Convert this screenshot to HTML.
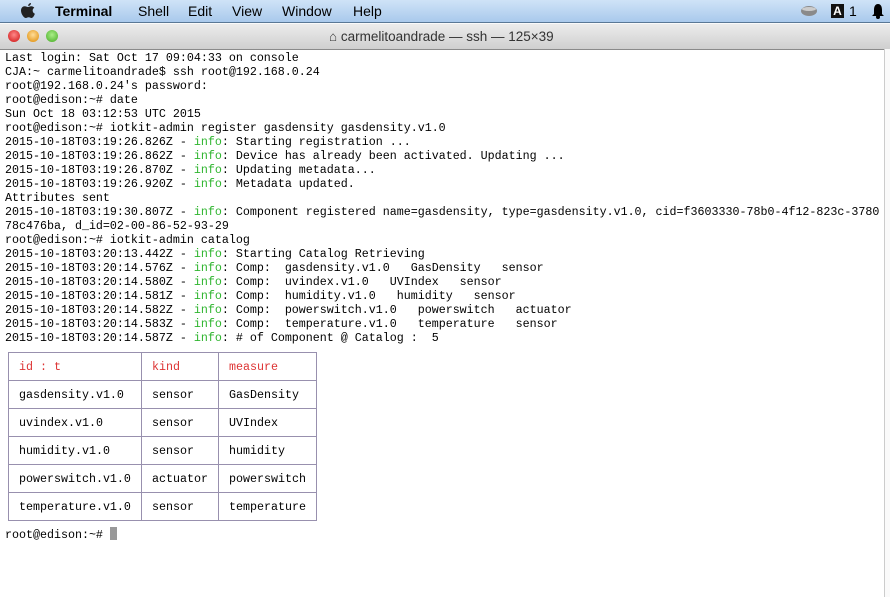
<!DOCTYPE html>
<html><head><style>
body{margin:0;width:890px;height:597px;overflow:hidden;background:#fff;font-family:"Liberation Sans",sans-serif;position:relative}
#menu{position:absolute;left:0;top:0;width:890px;height:22px;background:linear-gradient(#cfe3f7,#a9c9ec);border-bottom:1px solid #5a7896;font-size:14px;color:#000}
#menu span{position:absolute;top:3px}
#title{position:absolute;left:0;top:23px;width:890px;height:25px;background:linear-gradient(#ececec,#cfcfcf);border-top:1px solid #fafafa;border-bottom:1px solid #8a8a8a}
.dot{position:absolute;top:6px;width:12px;height:12px;border-radius:50%}
#term{position:absolute;left:5px;top:51px;font-family:"Liberation Mono",monospace;font-size:11.67px;line-height:14px;white-space:pre;color:#000}
.g{color:#2fb52f}
table{position:absolute;left:8px;top:352px;border-collapse:collapse;font-family:"Liberation Mono",monospace;font-size:11.67px}
td{border:1px solid #9890ae;height:28px;padding:0 0 0 10px;box-sizing:border-box}
.r{color:#d33}
#sb{position:absolute;right:0;top:49px;width:5px;height:548px;border-left:1px solid #ccc;background:#fafafa}
</style></head><body>
<div id="menu">
<svg style="position:absolute;left:20px;top:2px" width="16" height="18" viewBox="0 0 16 18"><path d="M11 1c0 1.5-1.2 3-2.8 3C8 2.5 9.3 1.1 11 1z" fill="#222"/><path d="M8 5c1 0 2-.8 3.3-.8 1 0 2.3.5 3 1.6-2.5 1.4-2 5 .6 6-.6 1.7-1.9 4.2-3.4 4.2-1.1 0-1.5-.7-2.8-.7-1.4 0-1.8.7-2.9.7C4 16 1 12 1 8.6 1 6 2.8 4.3 4.6 4.3 6 4.3 7 5 8 5z" fill="#222"/></svg>
<span style="left:55px;font-weight:bold">Terminal</span>
<span style="left:138px">Shell</span>
<span style="left:188px">Edit</span>
<span style="left:232px">View</span>
<span style="left:282px">Window</span>
<span style="left:353px">Help</span>
<svg style="position:absolute;left:800px;top:5px" width="20" height="12"><ellipse cx="9" cy="6" rx="8" ry="5" fill="#8a8a8a"/><ellipse cx="9" cy="4" rx="7" ry="2" fill="#ccc"/></svg>
<span style="left:831px;top:4px;width:13px;height:14px;background:#111;color:#fff;font-size:12px;text-align:center;line-height:14px;font-weight:bold">A</span>
<span style="left:849px">1</span>
<svg style="position:absolute;left:871px;top:3px" width="14" height="16"><path d="M7 1C4 1 3 4 3 7v4l-2 2h12l-2-2V7c0-3-1-6-4-6z" fill="#000"/><circle cx="7" cy="14" r="2" fill="#000"/></svg>
</div>
<div id="title">
<div class="dot" style="left:8px;background:radial-gradient(circle at 50% 40%,#f88,#c11)"></div>
<div class="dot" style="left:27px;background:radial-gradient(circle at 50% 40%,#fd9,#d80)"></div>
<div class="dot" style="left:46px;background:radial-gradient(circle at 50% 40%,#ae8,#4a2)"></div>
<div style="position:absolute;left:329px;top:5px;font-size:13.5px;color:#333">&#8962; carmelitoandrade — ssh — 125×39</div>
</div>
<div id="term">Last login: Sat Oct 17 09:04:33 on console
CJA:~ carmelitoandrade$ ssh root@192.168.0.24
root@192.168.0.24's password:
root@edison:~# date
Sun Oct 18 03:12:53 UTC 2015
root@edison:~# iotkit-admin register gasdensity gasdensity.v1.0
2015-10-18T03:19:26.826Z - <span class="g">info</span>: Starting registration ...
2015-10-18T03:19:26.862Z - <span class="g">info</span>: Device has already been activated. Updating ...
2015-10-18T03:19:26.870Z - <span class="g">info</span>: Updating metadata...
2015-10-18T03:19:26.920Z - <span class="g">info</span>: Metadata updated.
Attributes sent
2015-10-18T03:19:30.807Z - <span class="g">info</span>: Component registered name=gasdensity, type=gasdensity.v1.0, cid=f3603330-78b0-4f12-823c-3780
78c476ba, d_id=02-00-86-52-93-29
root@edison:~# iotkit-admin catalog
2015-10-18T03:20:13.442Z - <span class="g">info</span>: Starting Catalog Retrieving
2015-10-18T03:20:14.576Z - <span class="g">info</span>: Comp:  gasdensity.v1.0   GasDensity   sensor
2015-10-18T03:20:14.580Z - <span class="g">info</span>: Comp:  uvindex.v1.0   UVIndex   sensor
2015-10-18T03:20:14.581Z - <span class="g">info</span>: Comp:  humidity.v1.0   humidity   sensor
2015-10-18T03:20:14.582Z - <span class="g">info</span>: Comp:  powerswitch.v1.0   powerswitch   actuator
2015-10-18T03:20:14.583Z - <span class="g">info</span>: Comp:  temperature.v1.0   temperature   sensor
2015-10-18T03:20:14.587Z - <span class="g">info</span>: # of Component @ Catalog :  5</div>
<table>
<tr><td class="r" style="width:133px">id : t</td><td class="r" style="width:77px">kind</td><td class="r" style="width:98px">measure</td></tr>
<tr><td>gasdensity.v1.0</td><td>sensor</td><td>GasDensity</td></tr>
<tr><td>uvindex.v1.0</td><td>sensor</td><td>UVIndex</td></tr>
<tr><td>humidity.v1.0</td><td>sensor</td><td>humidity</td></tr>
<tr><td>powerswitch.v1.0</td><td>actuator</td><td>powerswitch</td></tr>
<tr><td>temperature.v1.0</td><td>sensor</td><td>temperature</td></tr>
</table>
<div style="position:absolute;left:5px;top:527px;font-family:'Liberation Mono',monospace;font-size:11.67px;line-height:14px;white-space:pre">root@edison:~# <span style="display:inline-block;width:7px;height:13px;background:#999;vertical-align:-2px"></span></div>
<div id="sb"></div>
</body></html>
